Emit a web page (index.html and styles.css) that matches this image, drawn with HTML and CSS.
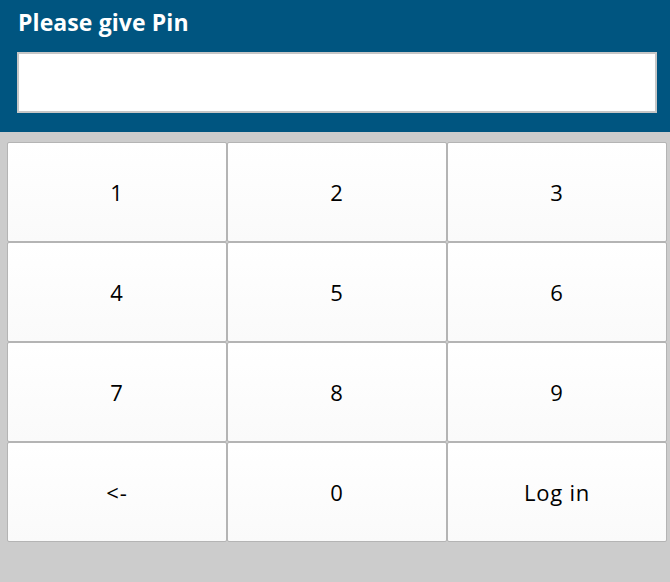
FILE: index.html
```html
<!DOCTYPE html>
<html>
<head>
<meta charset="utf-8">
<link rel="stylesheet" href="styles.css">
</head>
<body>
<div class="header">
  <div class="title">Please give Pin</div>
  <input class="pin" type="password">
</div>
<div class="pad">
  <button class="key">1</button>
  <button class="key">2</button>
  <button class="key">3</button>
  <button class="key">4</button>
  <button class="key">5</button>
  <button class="key">6</button>
  <button class="key">7</button>
  <button class="key">8</button>
  <button class="key">9</button>
  <button class="key">&lt;-</button>
  <button class="key">0</button>
  <button class="key">Log in</button>
</div>
</body>
</html>
```
FILE: styles.css
```css
html, body {
  margin: 0;
  padding: 0;
  background: #cccccc;
  font-family: "Open Sans", "Noto Sans", sans-serif;
}
.header {
  background: #005580;
  height: 132px;
  box-sizing: border-box;
  padding: 6px 13px 0 17px;
}
.title {
  color: #ffffff;
  font-weight: bold;
  font-size: 23px;
  line-height: 32px;
  padding-left: 1px;
  margin-bottom: 14px;
  letter-spacing: 0.1px;
}
.pin {
  display: block;
  box-sizing: border-box;
  width: 640px;
  height: 61px;
  margin: 0;
  border: 2px solid #c6c6c6;
  background: #ffffff;
  outline: none;
}
.pad {
  display: grid;
  grid-template-columns: repeat(3, 220px);
  grid-auto-rows: 100px;
  padding: 10px 3px 0 7px;
}
.key {
  margin: 0;
  box-sizing: border-box;
  border: 1px solid #b4b4b4;
  border-radius: 2px;
  background: linear-gradient(#ffffff, #fafafa);
  font-family: "Open Sans", "Noto Sans", sans-serif;
  font-size: 22px;
  letter-spacing: 0.8px;
  color: #000000;
  padding: 0;
}
```
